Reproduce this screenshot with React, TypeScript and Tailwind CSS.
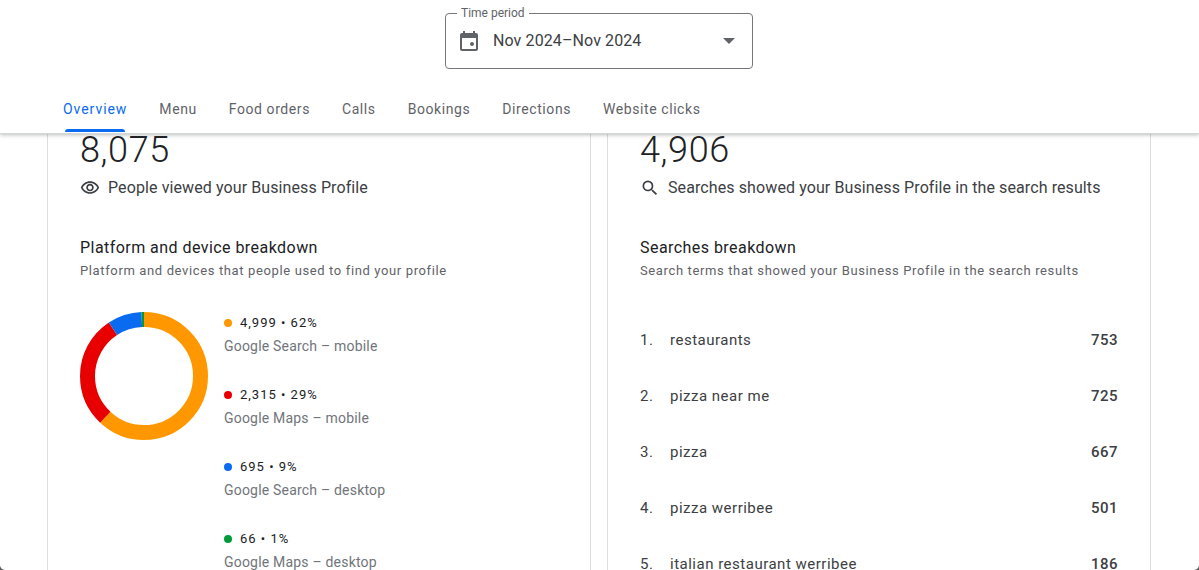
const tabs = ["Overview", "Menu", "Food orders", "Calls", "Bookings", "Directions", "Website clicks"];

const platforms = [
  { value: "4,999 • 62%", label: "Google Search – mobile", dot: "bg-[#ff9800]" },
  { value: "2,315 • 29%", label: "Google Maps – mobile", dot: "bg-[#e80000]" },
  { value: "695 • 9%", label: "Google Search – desktop", dot: "bg-[#0b6bf0]" },
  { value: "66 • 1%", label: "Google Maps – desktop", dot: "bg-[#009a3c]" },
];

const searches = [
  { term: "restaurants", count: 753 },
  { term: "pizza near me", count: 725 },
  { term: "pizza", count: 667 },
  { term: "pizza werribee", count: 501 },
  { term: "italian restaurant werribee", count: 186 },
];

function Donut() {
  const r = 56.5;
  const c = 2 * Math.PI * r;
  const segs = [
    { color: "#ff9800", share: 0.619 },
    { color: "#e80000", share: 0.287 },
    { color: "#0b6bf0", share: 0.086 },
    { color: "#009a3c", share: 0.008 },
  ];
  let offset = 0;
  return (
    <svg width="128" height="128" viewBox="0 0 128 128" className="-rotate-90">
      {segs.map((s) => {
        const el = (
          <circle
            key={s.color}
            cx="64"
            cy="64"
            r={r}
            fill="none"
            stroke={s.color}
            strokeWidth="15"
            strokeDasharray={`${s.share * c} ${c}`}
            strokeDashoffset={-offset * c}
          />
        );
        offset += s.share;
        return el;
      })}
    </svg>
  );
}

export default function App() {
  return (
    <div className="h-[570px] overflow-hidden bg-[#5a5a5a]">
      <div className="relative flex h-[570px] flex-col overflow-hidden rounded-b-[5px] bg-white font-['Roboto',sans-serif] text-[#202124]">
        {/* Sticky header */}
        <header className="relative z-10 h-[134px] shrink-0 border-b border-[#d4d5d7] bg-white shadow-[0_1px_4px_rgba(60,64,67,0.35)]">
          <div className="flex justify-center pr-[1px] pt-[13px]">
            <div className="relative flex h-[56px] w-[308px] items-center rounded border border-[#74777c] pl-[11px] pr-[17px]">
              <span className="absolute -top-[8px] left-[11px] bg-white px-[4px] text-[12px] leading-[14px] text-[#5f6368]">
                Time period
              </span>
              <svg width="24" height="24" viewBox="0 0 24 24" fill="#5f6368">
                <path d="M19 4h-1V2h-2v2H8V2H6v2H5c-1.1 0-2 .9-2 2v14c0 1.1.9 2 2 2h14c1.1 0 2-.9 2-2V6c0-1.1-.9-2-2-2zm0 16H5V9h14v11zm-4-7a2 2 0 1 0 0 4 2 2 0 0 0 0-4z" />
              </svg>
              <span className="ml-[12px] flex-1 text-[16px] tracking-[0.1px] text-[#3c4043]">Nov 2024–Nov 2024</span>
              <svg width="12" height="6" viewBox="0 0 12 6" fill="#5f6368">
                <path d="M0 0h12L6 6z" />
              </svg>
            </div>
          </div>
          <nav className="mt-[28px] flex gap-[32px] pl-[63px]">
            {tabs.map((t, i) => (
              <div
                key={t}
                className={`relative h-[25px] text-[14px] font-[450] leading-[25px] ${
                  i === 0 ? "tracking-[0.95px]" : "tracking-[0.58px]"
                }`}
              >
                <span className={i === 0 ? "text-[#0b6bf0]" : "text-[#5f6368]"}>{t}</span>
                {i === 0 && (
                  <div className="absolute -bottom-[10px] left-[2px] right-[2px] h-[3px] rounded-t-[3px] bg-[#0b6bf0]" />
                )}
              </div>
            ))}
          </nav>
        </header>

        <main className="flex gap-[16px] pl-[47px]">
          {/* Left card */}
          <section className="-mt-[6px] h-[480px] w-[544px] shrink-0 border-x border-[#dadce0] px-[32px]">
            <div className="text-[36px] font-[350] leading-[44px] tracking-[0.6px] text-[#202124]">8,075</div>
            <div className="mt-[4px] flex h-[24px] items-center gap-[8px]">
              <svg width="20" height="20" viewBox="0 0 24 24" fill="#3c4043">
                <path d="M12 6c3.79 0 7.17 2.13 8.82 5.5C19.17 14.87 15.79 17 12 17s-7.17-2.13-8.82-5.5C4.83 8.13 8.21 6 12 6m0-2C7 4 2.73 7.11 1 11.5 2.73 15.89 7 19 12 19s9.27-3.11 11-7.5C21.27 7.11 17 4 12 4zm0 5c1.38 0 2.5 1.12 2.5 2.5S13.38 14 12 14s-2.5-1.12-2.5-2.5S10.62 9 12 9m0-2c-2.48 0-4.5 2.02-4.5 4.5S9.52 16 12 16s4.5-2.02 4.5-4.5S14.48 7 12 7z" />
              </svg>
              <span className="text-[16px] tracking-[0.1px] text-[#3c4043]">People viewed your Business Profile</span>
            </div>
            <h2 className="mt-[35px] text-[16px] font-[450] leading-[26px] tracking-[0.45px] text-[#202124]">
              Platform and device breakdown
            </h2>
            <p className="text-[13px] leading-[20px] tracking-[0.63px] text-[#5f6368]">
              Platform and devices that people used to find your profile
            </p>
            <div className="mt-[31px] flex gap-[16px]">
              <Donut />
              <ul className="-mt-[1px] flex flex-col gap-[25px]">
                {platforms.map((p) => (
                  <li key={p.label}>
                    <div className="flex h-[24px] items-center gap-[8px] text-[13px] tracking-[1px] text-[#202124]">
                      <span className={`h-[8px] w-[8px] rounded-full ${p.dot}`} />
                      {p.value}
                    </div>
                    <div className="-mt-[1px] h-[24px] text-[14px] leading-[24px] tracking-[0.2px] text-[#70757a]">
                      {p.label}
                    </div>
                  </li>
                ))}
              </ul>
            </div>
          </section>

          {/* Right card */}
          <section className="-mt-[6px] h-[480px] w-[544px] shrink-0 border-x border-[#dadce0] px-[32px]">
            <div className="text-[36px] font-[350] leading-[44px] tracking-[0.6px] text-[#202124]">4,906</div>
            <div className="mt-[4px] flex h-[24px] items-center gap-[8px]">
              <svg width="20" height="20" viewBox="0 0 24 24" fill="#3c4043">
                <path d="M15.5 14h-.79l-.28-.27A6.471 6.471 0 0 0 16 9.5 6.5 6.5 0 1 0 9.5 16c1.61 0 3.09-.59 4.23-1.57l.27.28v.79l5 4.99L20.49 19l-4.99-5zm-6 0C7.01 14 5 11.99 5 9.5S7.01 5 9.5 5 14 7.01 14 9.5 11.99 14 9.5 14z" />
              </svg>
              <span className="text-[16px] tracking-[0.1px] text-[#3c4043]">
                Searches showed your Business Profile in the search results
              </span>
            </div>
            <h2 className="mt-[35px] text-[16px] font-[450] leading-[26px] tracking-[0.45px] text-[#202124]">
              Searches breakdown
            </h2>
            <p className="text-[13px] leading-[20px] tracking-[0.63px] text-[#5f6368]">
              Search terms that showed your Business Profile in the search results
            </p>
            <ol className="mt-[31px]">
              {searches.map((s, i) => (
                <li key={s.term} className="flex h-[56px] items-center text-[15px] tracking-[0.5px] text-[#3c4043]">
                  <span className="w-[30px]">{i + 1}.</span>
                  <span className="flex-1">{s.term}</span>
                  <span className="font-medium text-[#3c4043]">{s.count}</span>
                </li>
              ))}
            </ol>
          </section>
        </main>
      </div>
    </div>
  );
}
